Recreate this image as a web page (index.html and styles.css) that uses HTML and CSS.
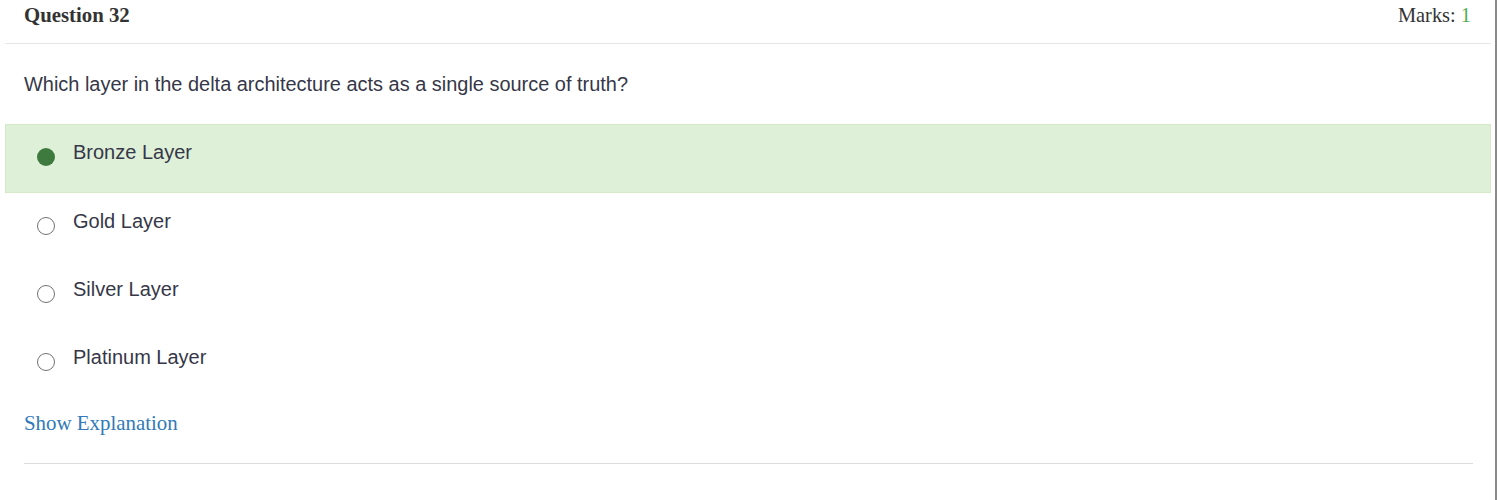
FILE: index.html
```html
<!DOCTYPE html>
<html>
<head>
<meta charset="utf-8">
<title>Question 32</title>
<link rel="stylesheet" href="styles.css">
</head>
<body>
<div class="page">
  <div class="panel">
    <div class="header">
      <span class="qnum">Question 32</span>
      <span class="marks">Marks: <span class="marks-val">1</span></span>
    </div>
    <p class="question">Which layer in the delta architecture acts as a single source of truth?</p>
    <ul class="options">
      <li class="option correct"><span class="radio checked"></span><span class="label">Bronze Layer</span></li>
      <li class="option"><span class="radio"></span><span class="label">Gold Layer</span></li>
      <li class="option"><span class="radio"></span><span class="label">Silver Layer</span></li>
      <li class="option"><span class="radio"></span><span class="label">Platinum Layer</span></li>
    </ul>
    <a class="explain" href="#">Show Explanation</a>
    <hr class="divider">
  </div>
  <div class="edge"></div>
</div>
</body>
</html>
```

FILE: styles.css
```css
html, body {
  margin: 0;
  padding: 0;
  background: #fff;
}
.page {
  display: flex;
  min-height: 500px;
}
.panel {
  flex: 1;
  margin-left: 5px;
  margin-right: 4px;
  display: flex;
  flex-direction: column;
}
.edge {
  width: 2px;
  background: #8a8a8a;
}
.header {
  height: 43px;
  border-bottom: 1px solid #e6e6e6;
  display: flex;
  justify-content: space-between;
  align-items: flex-start;
  padding: 0 20px 0 19px;
  font-family: "Liberation Serif", "Times New Roman", serif;
  line-height: 30px;
  color: #333;
}
.qnum {
  font-weight: bold;
  font-size: 20.8px;
}
.marks {
  font-size: 20.4px;
}
.marks-val {
  color: #4caf50;
}
.question {
  margin: 26px 0 0;
  padding: 0 19px;
  font-family: "Liberation Sans", Arial, sans-serif;
  font-size: 19.95px;
  line-height: 28px;
  color: #363748;
}
.options {
  list-style: none;
  margin: 26px 0 0;
  padding: 0;
}
.option {
  display: flex;
  align-items: flex-start;
  height: 68px;
  box-sizing: border-box;
  border: 1px solid transparent;
  padding: 13px 0 0 31px;
  font-family: "Liberation Sans", Arial, sans-serif;
  font-size: 20px;
  line-height: 28px;
  color: #363748;
}
.option.correct {
  background: #dff0d8;
  border-color: #d6e9c6;
  height: 69px;
  margin-bottom: -0.5px;
}
.radio {
  width: 18px;
  height: 18px;
  box-sizing: border-box;
  border-radius: 50%;
  border: 1.7px solid #727272;
  margin-top: 10px;
  margin-right: 18px;
  flex: none;
  background: #fff;
}
.radio.checked {
  border: none;
  background: #3e7a3e;
}
.explain {
  margin: 12px 0 0 19px;
  align-self: flex-start;
  font-family: "Liberation Serif", "Times New Roman", serif;
  font-size: 20.9px;
  line-height: 28px;
  color: #337ab7;
  text-decoration: none;
}
.divider {
  margin: 26px 18px 0 19px;
  border: none;
  border-top: 1px solid #dcdcdc;
  height: 0;
}
```
